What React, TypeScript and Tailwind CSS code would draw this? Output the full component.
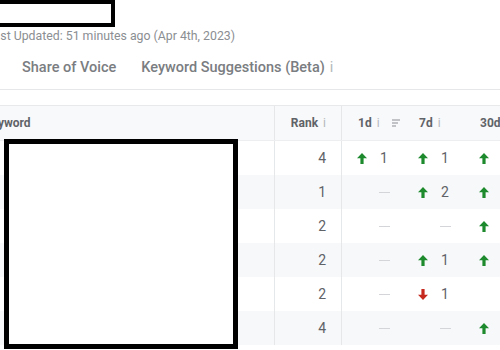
import React from "react";

type Move = { dir: "up" | "down"; n?: number } | null;

const rows: { rank: number; d1: Move; d7: Move; d30: Move }[] = [
  { rank: 4, d1: { dir: "up", n: 1 }, d7: { dir: "up", n: 1 }, d30: { dir: "up" } },
  { rank: 1, d1: null, d7: { dir: "up", n: 2 }, d30: { dir: "up" } },
  { rank: 2, d1: null, d7: null, d30: { dir: "up" } },
  { rank: 2, d1: null, d7: { dir: "up", n: 1 }, d30: { dir: "up" } },
  { rank: 2, d1: null, d7: { dir: "down", n: 1 }, d30: null },
  { rank: 4, d1: null, d7: null, d30: { dir: "up" } },
];

function Arrow({ dir }: { dir: "up" | "down" }) {
  return (
    <svg
      width="10"
      height="11"
      viewBox="0 0 10 11"
      className={dir === "up" ? "text-[#1e8a2e]" : "rotate-180 text-[#c62a1f]"}
    >
      <path d="M5 0 L10 5.2 H6.6 V11 H3.4 V5.2 H0 Z" fill="currentColor" />
    </svg>
  );
}

function Info() {
  return <span className="ml-[5px] font-normal text-[#b5b8bc]">i</span>;
}

function SortIcon() {
  return (
    <svg width="9" height="8" viewBox="0 0 9 8" className="ml-[12px] text-[#8a8e93]">
      <rect x="0" y="0.5" width="8" height="1" fill="currentColor" />
      <rect x="0" y="3.5" width="6" height="1" fill="currentColor" />
      <rect x="0" y="6.5" width="4" height="1" fill="currentColor" />
    </svg>
  );
}

function MoveCell({ m }: { m: Move }) {
  return (
    <div className="flex w-[61px] shrink-0 items-center justify-end pr-[15px]">
      {m === null ? (
        <span className="mr-[-2px] block h-px w-[11px] bg-[#d3d5d8]" />
      ) : (
        <>
          <Arrow dir={m.dir} />
          <span className="ml-[13px] w-[8px] text-[14px] text-[#5f6368]">{m.n ?? ""}</span>
        </>
      )}
    </div>
  );
}

export default function App() {
  return (
    <div className="h-[350px] w-[500px] overflow-hidden bg-white font-['Roboto',sans-serif]">
      {/* title placeholder */}
      <div className="h-[27px] w-[115px] border-[4px] border-l-0 border-black bg-white" />
      <p className="ml-[-13px] mt-[1px] whitespace-nowrap text-[12.3px] leading-[16px] text-[#8b8e92]">
        Last Updated: 51 minutes ago (Apr 4th, 2023)
      </p>

      <div className="mt-[1px] flex h-[45px] items-start whitespace-nowrap border-b border-[#e6e7e9] pl-[22px] pt-[15px] text-[14.5px] font-medium leading-[16px] text-[#7a7d81]">
        <span>Share of Voice</span>
        <span className="ml-[25px]">
          Keyword Suggestions (Beta)<Info />
        </span>
      </div>

      <div className="ml-[-33px] mt-[15px] w-[560px] border-t border-[#e8e9eb]">
        <div className="flex h-[35px] items-center border-b border-[#eceef0] bg-[#f8f9fa] text-[12px] font-bold text-[#5f6368]">
          <div className="flex h-full w-[308px] shrink-0 items-center border-r border-[#e6e7e9] pl-[17px]">
            Keyword
          </div>
          <div className="flex h-full w-[67px] shrink-0 items-center justify-end border-r border-[#e6e7e9] pr-[15px]">
            Rank<Info />
          </div>
          <div className="flex w-[61px] shrink-0 items-center pl-[16px]">
            1d<Info />
            <SortIcon />
          </div>
          <div className="flex w-[61px] shrink-0 items-center pl-[16px]">
            7d<Info />
          </div>
          <div className="flex w-[61px] shrink-0 items-center pl-[16px]">
            30d<Info />
          </div>
        </div>

        <div className="relative">
          {rows.map((r, i) => (
            <div
              key={i}
              className={`flex h-[34px] items-center ${i % 2 === 1 ? "bg-[#f7f8f9]" : "bg-white"}`}
            >
              <div className="h-full w-[308px] shrink-0 border-r border-[#e6e7e9]" />
              <div className="flex h-full w-[67px] shrink-0 items-center justify-end border-r border-[#e6e7e9] pr-[15px] text-[14px] text-[#5f6368]">
                {r.rank}
              </div>
              <MoveCell m={r.d1} />
              <MoveCell m={r.d7} />
              <MoveCell m={r.d30} />
            </div>
          ))}
          {/* keyword list placeholder */}
          <div className="absolute left-[37px] top-[-2px] h-[210px] w-[234px] border-[5px] border-black bg-white" />
        </div>
      </div>
    </div>
  );
}
